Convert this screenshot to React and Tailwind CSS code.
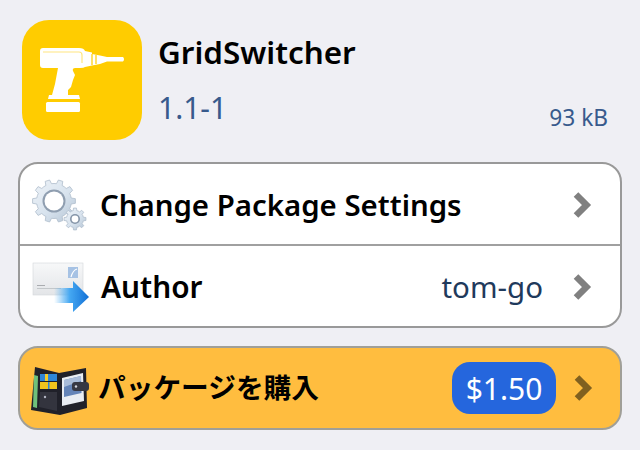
import React from "react";

const sans = { fontFamily: '"Noto Sans", "Noto Sans CJK JP", sans-serif' };

const Chevron = ({ color }) => (
  <svg width="20" height="28" viewBox="0 0 20 28" className="shrink-0">
    <path d="M4 3.5 L14.5 14 L4 24.5" fill="none" stroke={color} strokeWidth="6.5" />
  </svg>
);

const DrillIcon = () => (
  <div className="w-[120px] h-[120px] rounded-[27px] bg-[#ffcc00] shrink-0">
    <svg width="120" height="120" viewBox="0 0 120 120" className="blur-[0.4px]">
      <path
        fill="#fff"
        d="M18 31 Q18 28 21 28 H57 Q62 28 63 31 L70 32.5 V34 L78 35.5 L85 37 H101 Q103 39 101 41.5 H85 L78 44 L70 45.5 L63 47 Q62 48 58 48 H53 Q50 48 51 51 L53 55 L51 60 L49 67 L46 70 L46 75 H57 L58 79 H26 L27 75 H30 L33 64 L36 48 H21 Q18 48 18 45 Z"
      />
      <path d="M21 32 H57 Q60 32 60 35 V43" fill="none" stroke="#ffe680" strokeWidth="1.2" />
      <path d="M70 34 V45 M74 35 V44" stroke="#ffcc00" strokeWidth="1.2" />
      <rect x="24" y="82" width="34" height="10" rx="1.5" fill="#fff" />
    </svg>
  </div>
);

// cog outline with n teeth, centred on cx,cy
const cogPath = (cx, cy, outer, inner, n) => {
  const pts = [];
  for (let i = 0; i < n; i++) {
    const a = (i * 2 * Math.PI) / n;
    const s = (2 * Math.PI) / n;
    [
      [inner, a - s * 0.5],
      [inner, a - s * 0.27],
      [outer, a - s * 0.17],
      [outer, a + s * 0.17],
      [inner, a + s * 0.27],
    ].forEach(([r, t]) => pts.push(`${(cx + r * Math.cos(t)).toFixed(1)} ${(cy + r * Math.sin(t)).toFixed(1)}`));
  }
  return "M" + pts.join(" L") + " Z";
};

const GearsIcon = () => (
  <svg width="60" height="56" viewBox="0 0 60 56" className="shrink-0 blur-[0.4px]">
    <defs>
      <linearGradient id="gear" x1="0" y1="0" x2="1" y2="1">
        <stop offset="0" stopColor="#eef3f8" />
        <stop offset="0.55" stopColor="#d8e3ee" />
        <stop offset="1" stopColor="#b4c4d4" />
      </linearGradient>
    </defs>
    <path d={cogPath(22, 24, 21.5, 17.5, 10)} fill="url(#gear)" stroke="#aebccb" strokeWidth="0.8" />
    <circle cx="22" cy="24" r="11.5" fill="#8f9eb0" />
    <circle cx="22" cy="24" r="9.5" fill="#fff" />
    <path d={cogPath(43, 42, 11, 8.5, 8)} fill="url(#gear)" stroke="#aebccb" strokeWidth="0.8" />
    <circle cx="43" cy="42" r="5" fill="#8595a8" />
    <circle cx="43" cy="42" r="3.4" fill="#fff" />
  </svg>
);

const MailIcon = () => (
  <svg width="60" height="52" viewBox="0 0 60 52" className="shrink-0 blur-[0.3px]">
    <defs>
      <linearGradient id="env" x1="0" y1="0" x2="0" y2="1">
        <stop offset="0" stopColor="#f7f8f9" />
        <stop offset="1" stopColor="#e3e5e8" />
      </linearGradient>
      <linearGradient id="arr" x1="0" y1="0" x2="1" y2="0">
        <stop offset="0" stopColor="#5ab4f5" stopOpacity="0" />
        <stop offset="0.45" stopColor="#45a8f2" />
        <stop offset="1" stopColor="#1270d6" />
      </linearGradient>
    </defs>
    <rect x="1" y="2" width="50" height="32" fill="url(#env)" stroke="#d3d6da" strokeWidth="0.6" />
    <rect x="36" y="6" width="10" height="11" fill="#a6c2e4" />
    <path d="M39 16 Q41 9 45 8" fill="none" stroke="#fff" strokeWidth="1.2" />
    <rect x="5" y="24" width="8" height="0.8" fill="#9a9da1" />
    <rect x="5" y="27" width="24" height="0.8" fill="#bbbec2" />
    <path d="M22 27 H41 V20 L57 36 L41 51 V42 H22 Z" fill="url(#arr)" />
  </svg>
);

const WalletIcon = () => (
  <svg width="60" height="54" viewBox="0 0 60 54" className="shrink-0 blur-[0.3px]">
    <path d="M4 6 L28 12 L55 7 L56 47 L29 54 L0 49 Z" fill="#20212a" />
    <path d="M3 14 L7 15 L6 47 L2 46 Z" fill="#6fc07a" />
    <rect x="9" y="13" width="17" height="7" fill="#2f86d8" />
    <rect x="14" y="13" width="3" height="7" fill="#f2cb2a" />
    <rect x="9" y="21" width="17" height="7" fill="#f2c41c" />
    <rect x="17" y="21" width="1.5" height="7" fill="#2f86d8" />
    <path d="M9 31 L26 31 L26 50 L8 46 Z" fill="#33343e" />
    <circle cx="14" cy="36" r="1.2" fill="#b4b7c4" />
    <path d="M31 17 L52 12 L53 40 L31 45 Z" fill="#e9edf3" />
    <path d="M33 19 L50 15 L50.5 32 L33 36 Z" fill="#6484b8" />
    <path d="M33 19 L50 15 L50 20 L33 26 Z" fill="#a9bcd9" />
    <rect x="41" y="21" width="17" height="9" rx="3" fill="#363843" />
    <circle cx="45" cy="25.5" r="1.2" fill="#d2d4de" />
  </svg>
);

export default function App() {
  return (
    <div className="w-[640px] h-[450px] overflow-hidden bg-[#efeff4] px-[18px] pt-5" style={sans}>
      <div className="flex pl-1 pr-[14px] h-[122px]">
        <DrillIcon />
        <div className="flex flex-col ml-4 pt-[12px]">
          <div className="text-[31.4px] leading-10 font-semibold text-black">GridSwitcher</div>
          <div className="text-[30px] leading-10 mt-[16px] text-[#385a8c]">1.1-1</div>
        </div>
        <div className="ml-auto self-end text-[22.7px] leading-7 pb-[10px] text-[#385a8c]">93 kB</div>
      </div>

      <div className="mt-5 border-2 border-[#999999] rounded-[20px] bg-white overflow-hidden">
        <div className="flex items-center h-[82px] pt-[2px] pl-[12px] pr-[28px] border-b-2 border-[#a0a0a0]">
          <GearsIcon />
          <div className="ml-2 text-[29.4px] font-semibold text-black">Change Package Settings</div>
          <div className="ml-auto"><Chevron color="#808080" /></div>
        </div>
        <div className="flex items-center h-[80px] pt-[2px] pl-[12px] pr-[28px]">
          <MailIcon />
          <div className="ml-[9px] text-[29.8px] font-semibold text-black">Author</div>
          <div className="ml-auto mr-[29px] text-[29.5px] text-[#1f3a5c]">tom-go</div>
          <Chevron color="#808080" />
        </div>
      </div>

      <div className="mt-[18px] h-[84px] flex items-center border-2 border-[#a09f98] rounded-[20px] bg-[#ffbd3f] pl-[11px] pr-[27px]">
        <WalletIcon />
        <div className="ml-[7px] text-[27.7px] font-bold text-black">パッケージを購入</div>
        <div className="ml-auto mr-[17px] w-[104px] h-[52px] rounded-[18px] bg-[#2566dd] text-white text-[30px] flex items-center justify-center">$1.50</div>
        <Chevron color="#80601f" />
      </div>
    </div>
  );
}
